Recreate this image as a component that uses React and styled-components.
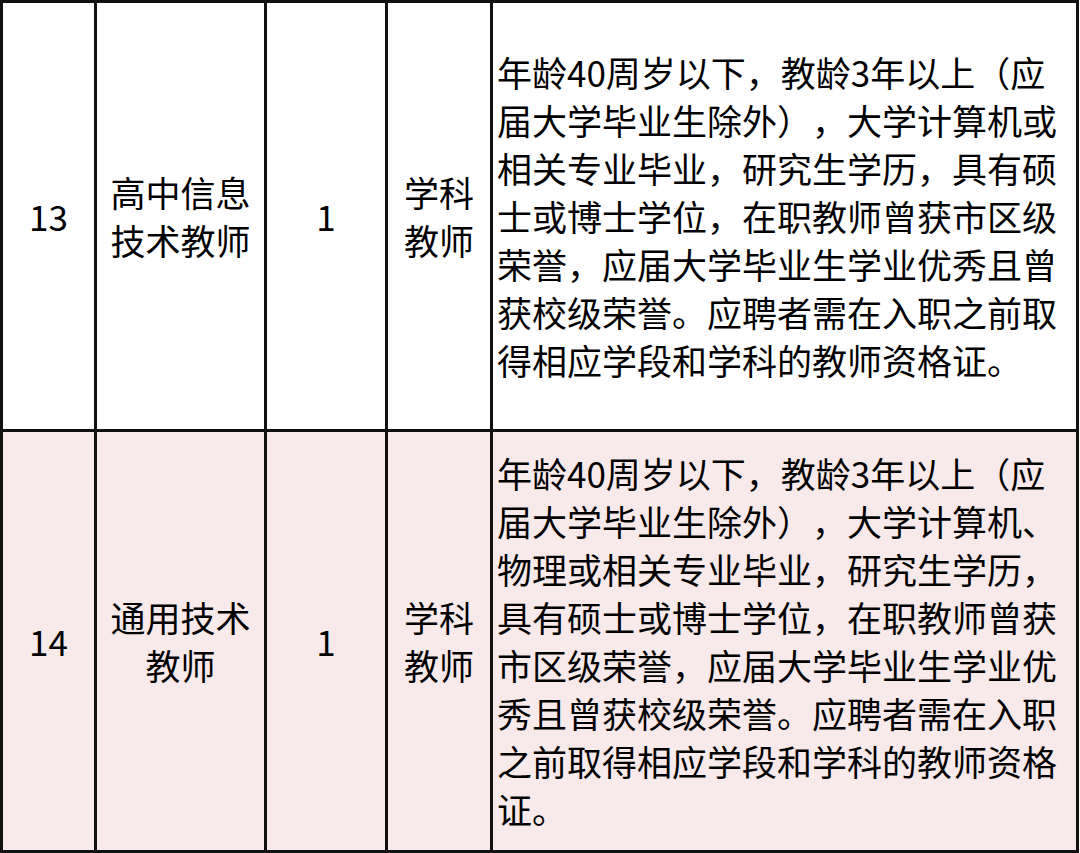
import React from "react";
import styled, { createGlobalStyle } from "styled-components";

const rows = [
  {
    no: "13",
    name: ["高中信息", "技术教师"],
    count: "1",
    kind: ["学科", "教师"],
    lines: [
      "年龄40周岁以下，教龄3年以上（应",
      "届大学毕业生除外），大学计算机或",
      "相关专业毕业，研究生学历，具有硕",
      "士或博士学位，在职教师曾获市区级",
      "荣誉，应届大学毕业生学业优秀且曾",
      "获校级荣誉。应聘者需在入职之前取",
      "得相应学段和学科的教师资格证。",
    ],
  },
  {
    no: "14",
    name: ["通用技术", "教师"],
    count: "1",
    kind: ["学科", "教师"],
    shaded: true,
    lines: [
      "年龄40周岁以下，教龄3年以上（应",
      "届大学毕业生除外），大学计算机、",
      "物理或相关专业毕业，研究生学历，",
      "具有硕士或博士学位，在职教师曾获",
      "市区级荣誉，应届大学毕业生学业优",
      "秀且曾获校级荣誉。应聘者需在入职",
      "之前取得相应学段和学科的教师资格",
      "证。",
    ],
  },
];

const App = () => {
  return (
    <>
      <GlobalStyle />
      <Table>
        <colgroup>
          <col style={{ width: 94 }} />
          <col style={{ width: 170 }} />
          <col style={{ width: 121 }} />
          <col style={{ width: 105 }} />
          <col style={{ width: 586 }} />
        </colgroup>
        <tbody>
          {rows.map((row, i) => (
            <Row key={row.no} $shaded={row.shaded} $height={i === 0 ? 429 : 421}>
              <Cell>{row.no}</Cell>
              <Cell>
                {row.name.map((t) => (
                  <Line key={t}>{t}</Line>
                ))}
              </Cell>
              <Cell>{row.count}</Cell>
              <Cell>
                {row.kind.map((t) => (
                  <Line key={t}>{t}</Line>
                ))}
              </Cell>
              <Cell $left>
                {row.lines.map((t, j) => (
                  <Line key={j}>{t}</Line>
                ))}
              </Cell>
            </Row>
          ))}
        </tbody>
      </Table>
    </>
  );
};

export default App;

const GlobalStyle = createGlobalStyle`
  html, body {
    margin: 0;
    padding: 0;
    background: #ffffff;
  }
  body {
    font-family: "Noto Sans CJK SC", "Noto Sans", sans-serif;
    color: #000000;
  }
`;

const Table = styled.table`
  width: 1079px;
  table-layout: fixed;
  border-collapse: collapse;
  border: 3px solid #111111;
`;

const Row = styled.tr`
  height: ${(p) => p.$height}px;
  background: ${(p) => (p.$shaded ? "#f8eaea" : "#ffffff")};
`;

const Cell = styled.td`
  border: 3px solid #111111;
  padding: ${(p) => (p.$left ? "0 0 0 4px" : "0")};
  vertical-align: middle;
  text-align: ${(p) => (p.$left ? "left" : "center")};
  font-size: 35px;
  line-height: 48px;
  white-space: nowrap;
  overflow: hidden;
  text-spacing-trim: space-all;
`;

const Line = styled.div`
  display: block;
`;
